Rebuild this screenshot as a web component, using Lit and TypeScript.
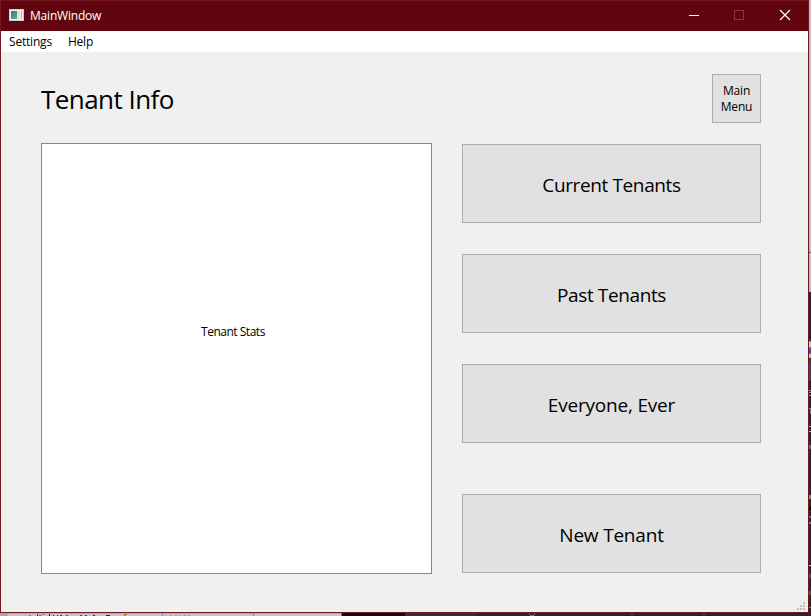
import { LitElement, html, css, svg } from "lit";
import { customElement, property } from "lit/decorators.js";

type Mark = [number, number, number, number, string];

const rightEdge: Mark[] = [
  [0, 0, 2, 292, "#c9c6c8"], [0, 0, 1, 292, "#bab7b9"], [0, 252, 2, 1, "#69676a"],
  [0, 292, 2, 45, "#2b292c"], [0, 337, 2, 1, "#080808"], [0, 338, 2, 3, "#39373a"],
  [0, 341, 2, 1, "#b58b5c"], [0, 342, 2, 5, "#d8cbb4"], [0, 347, 2, 2, "#6d6a9a"],
  [0, 349, 2, 4, "#1555d8"], [0, 353, 2, 1, "#86743c"], [0, 354, 2, 4, "#d0c3ac"],
  [0, 358, 2, 3, "#3a2c25"], [0, 361, 2, 20, "#484649"], [0, 381, 2, 1, "#1a191b"],
  [0, 390, 2, 1, "#a9a9ac"], [0, 392, 2, 1, "#8d8d91"], [0, 395, 2, 1, "#9a9aa0"],
  [0, 408, 2, 1, "#a08d69"], [1, 409, 1, 5, "#5f8493"], [0, 426, 2, 1, "#b1b1b3"],
  [0, 431, 2, 1, "#b1b1b3"], [0, 445, 2, 4, "#3573b5"], [0, 495, 2, 4, "#899067"],
  [0, 507, 2, 3, "#09090a"], [0, 516, 2, 2, "#646266"], [0, 522, 2, 2, "#7b797c"],
  [0, 565, 2, 1, "#d5d5d5"], [0, 574, 2, 4, "#4e565f"], [0, 591, 2, 4, "#5c594c"],
  [0, 607, 2, 1, "#77777a"],
];

const bottomEdge: Mark[] = [
  [0, 0, 342, 3, "#c5c3c5"], [0, 0, 342, 1, "#b2afb1"], [0, 0, 8, 3, "#a9aaa8"],
  [29, 2, 2, 1, "#858286"], [37, 1, 1, 2, "#3b4963"], [39, 2, 2, 1, "#426b84"],
  [42, 1, 2, 1, "#a1794e"], [49, 1, 1, 2, "#161416"], [53, 2, 1, 1, "#29272a"],
  [57, 2, 1, 1, "#29272a"], [60, 2, 2, 1, "#464347"], [66, 2, 2, 1, "#5c5a5d"],
  [80, 2, 2, 1, "#5d472f"], [85, 2, 2, 1, "#364961"], [93, 2, 2, 1, "#29272a"],
  [106, 2, 4, 1, "#242225"], [124, 1, 3, 1, "#b17c36"], [124, 2, 1, 1, "#85643a"],
  [162, 0, 1, 3, "#7090b8"], [253, 0, 1, 3, "#7090b8"],
  [166, 2, 1, 1, "#a3a1a3"], [170, 2, 2, 1, "#a3a1a3"], [175, 2, 2, 1, "#a3a1a3"],
  [179, 2, 2, 1, "#a3a1a3"], [184, 2, 2, 1, "#a3a1a3"], [188, 2, 2, 1, "#a3a1a3"],
  [341, 0, 1, 3, "#777077"], [342, 0, 63, 3, "#140b10"], [405, 0, 71, 3, "#353236"],
  [476, 0, 335, 3, "#29272a"], [529, 0, 1, 2, "#397080"], [530, 2, 4, 1, "#77797a"],
  [534, 0, 1, 2, "#77797a"], [631, 1, 2, 1, "#4d6272"], [703, 1, 2, 1, "#4d6272"],
];

const marks = (list: Mark[]) =>
  list.map(([x, y, w, h, c]) => svg`<rect x=${x} y=${y} width=${w} height=${h} fill=${c}></rect>`);

@customElement("push-button")
class PushButton extends LitElement {
  @property() label = "";
  static styles = css`
    :host { display: block; }
    .button {
      display: flex; align-items: center; justify-content: center;
      width: 100%; height: 100%; box-sizing: border-box; margin: 0;
      padding: var(--drop, 0px) 0 0; border: 1px solid #adadad; border-radius: 0;
      background: #e1e1e1; color: #000; font: inherit; letter-spacing: inherit;
      text-align: center; white-space: pre-line;
    }
  `;
  render() {
    return html`<button class="button">${this.label}</button>`;
  }
}

@customElement("app-root")
class AppRoot extends LitElement {
  static styles = css`
    :host {
      display: grid; grid-template: 613px 3px / 809px 2px;
      width: 811px; height: 616px; overflow: hidden;
      font: 12px/16px "Open Sans", "Noto Sans", sans-serif; color: #000;
    }
    svg { display: block; }
    .bottom { grid-column: 1 / 3; }
    .window {
      display: flex; flex-direction: column; box-sizing: border-box;
      border: 1px solid #751620; background: #f0f0f0;
    }
    .title {
      display: flex; align-items: center; height: 30px; background: #61060e; color: #fff;
    }
    .app-icon { margin: 0 6px 2px 8px; }
    .name { flex: 1; letter-spacing: -0.2px; }
    .menu {
      display: flex; gap: 16px; height: 21px; padding-left: 8px;
      background: #fff; line-height: 22px; letter-spacing: -0.2px;
    }
    .content { flex: 1; display: flex; flex-direction: column; padding: 22px 47px 0 40px; }
    .head { display: flex; justify-content: space-between; height: 49px; }
    h1 { margin: 0; font-size: 26px; font-weight: 400; line-height: 51px; letter-spacing: -0.55px; }
    .home { width: 49px; height: 49px; letter-spacing: -0.15px; }
    .body { display: flex; justify-content: space-between; margin-top: 20px; }
    .stats {
      width: 391px; height: 431px; box-sizing: border-box; border: 1px solid #828790;
      background: #fff; padding: 180px 0 0 159px; letter-spacing: -0.48px;
    }
    .actions { display: flex; flex-direction: column; gap: 31px; padding-top: 1px; }
    .action {
      width: 299px; height: 79px; --drop: 2px;
      font-size: 19px; line-height: 26px; letter-spacing: -0.2px;
    }
    .tight { letter-spacing: -0.38px; }
    .last { margin-top: 20px; }
    .grip { align-self: flex-end; margin: auto 3px 2px 0; }
  `;
  render() {
    return html`
      <div class="window">
        <div class="title">
          <svg class="app-icon" width="15" height="12" viewBox="0 0 15 12">
            <defs>
              <linearGradient id="pane" x2="0.6" y2="1">
                <stop offset="0" stop-color="#3f729c"></stop>
                <stop offset="1" stop-color="#5ba581"></stop>
              </linearGradient>
            </defs>
            <rect width="15" height="12" fill="#c9ced2"></rect>
            <rect x="1" y="1" width="13" height="10" fill="#f3f5f5"></rect>
            <rect x="2" y="2" width="6" height="8" fill="url(#pane)"></rect>
            <rect x="8" y="2" width="3" height="8" fill="#dce2e6"></rect>
            <rect x="12" y="2" width="1" height="8" fill="#a5beba"></rect>
          </svg>
          <span class="name">MainWindow</span>
          <svg width="138" height="30" viewBox="0 0 138 30" fill="none">
            <path d="M19 14.5H29" stroke="#fff"></path>
            <rect x="64.5" y="9.5" width="9" height="9" stroke="#85373d"></rect>
            <path d="M110 9L120 19M120 9L110 19" stroke="#fff" stroke-width="1.2"></path>
          </svg>
        </div>
        <nav class="menu"><span>Settings</span><span>Help</span></nav>
        <main class="content">
          <div class="head">
            <h1>Tenant Info</h1>
            <push-button class="home" .label=${"Main\nMenu"}></push-button>
          </div>
          <div class="body">
            <div class="stats">Tenant Stats</div>
            <div class="actions">
              <push-button class="action tight" label="Current Tenants"></push-button>
              <push-button class="action tight" label="Past Tenants"></push-button>
              <push-button class="action" label="Everyone, Ever"></push-button>
              <push-button class="action last" label="New Tenant"></push-button>
            </div>
          </div>
        </main>
        <svg class="grip" width="8" height="8" viewBox="0 0 8 8" fill="#bfbfbf">
          <path d="M6 0h2v2h-2zM3 3h2v2h-2zM6 3h2v2h-2zM0 6h2v2h-2zM3 6h2v2h-2zM6 6h2v2h-2z"></path>
        </svg>
      </div>
      <svg width="2" height="613" viewBox="0 0 2 613" shape-rendering="crispEdges">
        <rect width="2" height="613" fill="#29272a"></rect>${marks(rightEdge)}
      </svg>
      <svg class="bottom" width="811" height="3" viewBox="0 0 811 3" shape-rendering="crispEdges">
        ${marks(bottomEdge)}
      </svg>
    `;
  }
}
